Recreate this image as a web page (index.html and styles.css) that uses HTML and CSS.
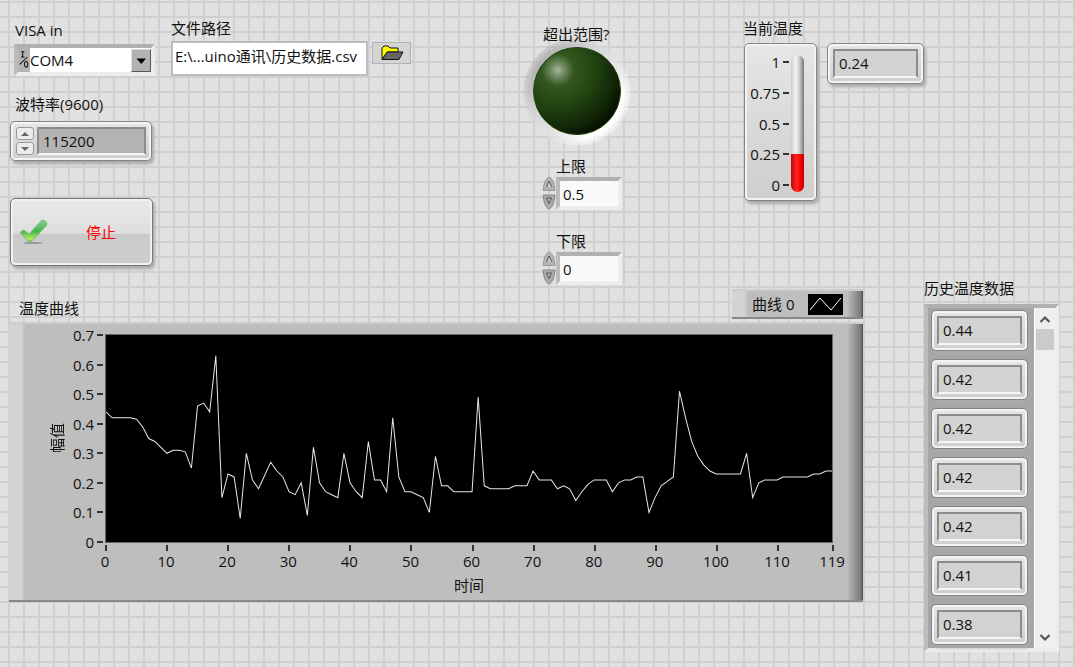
FILE: index.html
```
<!DOCTYPE html>
<html lang="zh-CN">
<head>
<meta charset="utf-8">
<title>温度监控</title>
<link rel="stylesheet" href="styles.css">
</head>
<body>
<main class="panel">
  <div class="main-column">
    <div class="top-row">
      <div class="settings">
        <div class="connection">
          <label class="label indent" for="visa">VISA in</label>
          <div class="visa sunken">
            <svg class="visa-icon" viewBox="0 0 14 24" aria-hidden="true"><path d="M3.500 2.500h4M5.500 2.500v6M3.500 8.500h4M2 17L11 8.500" fill="none" stroke="#111" stroke-width="1.200"/><ellipse cx="9.500" cy="17" rx="2" ry="3.300" fill="none" stroke="#111" stroke-width="1.200"/></svg>
            <select id="visa" class="visa-select"><option>COM4</option></select>
            <span class="visa-arrow"><svg viewBox="0 0 18 21" aria-hidden="true"><path d="M4.500 8.500h9.500l-4.700 5.500z" fill="#000"/></svg></span>
          </div>
          <label class="label indent baud-label" for="baud">波特率(9600)</label>
          <div class="bezel baud">
            <div class="stepper">
              <button type="button" class="step" aria-label="增加"><span class="tri up"></span></button>
              <button type="button" class="step" aria-label="减少"><span class="tri down"></span></button>
            </div>
            <input id="baud" class="readout baud-input" type="text" value="115200">
          </div>
          <button type="button" class="stop">
            <svg class="check" viewBox="0 0 30 26" aria-hidden="true">
              <defs><linearGradient id="leaf" x1="0" y1="0" x2="0" y2="1"><stop offset="0" stop-color="#8fd097"/><stop offset=".5" stop-color="#46b54c"/><stop offset=".85" stop-color="#b4ec62"/><stop offset="1" stop-color="#5cb436"/></linearGradient></defs>
              <ellipse cx="14" cy="24" rx="10" ry="1" fill="#999"/>
              <path d="M1 13.500L4.500 11l5.500 4L22.500 1.500l2.500-.5L28 4l-.5 2.500L13.500 21.500 10.500 23.500z" fill="url(#leaf)" stroke="#6ab870" stroke-width=".8"/>
            </svg>
            <span class="stop-text">停止</span>
          </button>
        </div>
        <div class="file">
          <label class="label" for="path">文件路径</label>
          <div class="file-row">
            <input id="path" class="path-input" type="text" value="E:\...uino通讯\历史数据.csv">
            <button type="button" class="browse" aria-label="浏览">
              <svg viewBox="0 0 24 16" aria-hidden="true"><path d="M2 14V3l2-2h4l2 2h8v4H8z" fill="#ff0" stroke="#111"/><path d="M2 14.500L7 7h16l-4 7.500z" fill="#666" stroke="#111"/></svg>
            </button>
          </div>
        </div>
      </div>

      <div class="range">
        <svg class="led" viewBox="0 0 108 108" role="img" aria-label="超出范围">
          <defs>
            <linearGradient id="ring" x1=".1" y1=".2" x2=".85" y2=".85"><stop offset="0" stop-color="#a8a8a8"/><stop offset=".25" stop-color="#cdcdcd"/><stop offset=".5" stop-color="#dfdfdf"/><stop offset=".7" stop-color="#ececec"/><stop offset=".85" stop-color="#fff"/></linearGradient>
            <radialGradient id="fade"><stop offset=".86" stop-color="#fff"/><stop offset="1" stop-color="#fff" stop-opacity=".25"/></radialGradient>
            <mask id="soft"><circle cx="54" cy="54" r="54" fill="url(#fade)"/></mask>
            <radialGradient id="lens" cx=".28" cy=".26" r=".8"><stop offset="0" stop-color="#a6b79c"/><stop offset=".1" stop-color="#6f8a62"/><stop offset=".23" stop-color="#34571f"/><stop offset=".55" stop-color="#204210"/><stop offset=".85" stop-color="#102406"/><stop offset="1" stop-color="#061000"/></radialGradient>
          </defs>
          <circle cx="54" cy="54" r="54" fill="url(#ring)" mask="url(#soft)"/>
          <circle cx="54" cy="53" r="43.500" fill="url(#lens)" stroke="#1c440a"/>
        </svg>
        <div class="label led-label">超出范围?</div>
        <div class="limit">
          <label class="label" for="upper">上限</label>
          <div class="limit-row">
            <div class="knobs">
              <button type="button" class="knob" aria-label="上限增加"><svg viewBox="0 0 16 17"><path d="M2 14.500Q3 3 8 1q5 2 6 13.500z" fill="#b4b4b4" stroke="#999"/><path d="M5.500 11L8 5l3 6" fill="#ccc" stroke="#555"/></svg></button>
              <button type="button" class="knob" aria-label="上限减少"><svg viewBox="0 0 16 17"><path d="M2 2h12Q13 14 8 16 3 14 2 2z" fill="#aaa" stroke="#888"/><path d="M5.500 5h5L8 10.500z" fill="#bbb" stroke="#555"/></svg></button>
            </div>
            <div class="sunken limit-frame"><input id="upper" class="limit-input" type="text" value="0.5"></div>
          </div>
        </div>
        <div class="limit second">
          <label class="label" for="lower">下限</label>
          <div class="limit-row">
            <div class="knobs">
              <button type="button" class="knob" aria-label="下限增加"><svg viewBox="0 0 16 17"><path d="M2 14.500Q3 3 8 1q5 2 6 13.500z" fill="#b4b4b4" stroke="#999"/><path d="M5.500 11L8 5l3 6" fill="#ccc" stroke="#555"/></svg></button>
              <button type="button" class="knob" aria-label="下限减少"><svg viewBox="0 0 16 17"><path d="M2 2h12Q13 14 8 16 3 14 2 2z" fill="#aaa" stroke="#888"/><path d="M5.500 5h5L8 10.500z" fill="#bbb" stroke="#555"/></svg></button>
            </div>
            <div class="sunken limit-frame"><input id="lower" class="limit-input" type="text" value="0"></div>
          </div>
        </div>
      </div>

      <div class="temperature">
        <div class="label">当前温度</div>
        <div class="temperature-row">
          <div class="bezel thermometer">
            <div class="scale">
              <span class="mark">1</span><span class="mark">0.75</span><span class="mark">0.5</span><span class="mark">0.25</span><span class="mark">0</span>
            </div>
            <div class="tube"><div class="mercury"></div></div>
          </div>
          <div class="bezel cell"><output class="readout">0.24</output></div>
        </div>
      </div>
    </div>

    <section class="chart">
      <div class="chart-head">
        <h2 class="label chart-title">温度曲线</h2>
        <div class="slab legend">
          <span>曲线 0</span>
          <svg class="legend-icon" viewBox="0 0 35 21" aria-hidden="true"><rect width="35" height="21" fill="#000"/><path d="M2 16L12 4l11 12L33 4" fill="none" stroke="#fff"/></svg>
        </div>
      </div>
      <div class="slab graph">
        <div class="y-title">幅值</div>
        <div class="y-axis">
          <span class="mark">0.7</span><span class="mark">0.6</span><span class="mark">0.5</span><span class="mark">0.4</span><span class="mark">0.3</span><span class="mark">0.2</span><span class="mark">0.1</span><span class="mark">0</span>
        </div>
        <svg class="plot" viewBox="0 0 119 70" preserveAspectRatio="none" role="img" aria-label="温度曲线">
          <polyline class="trace" points="0,26 1,28 2,28 3,28 4,28 5,28.500 6,31 7,35 8,36 9,38 10,40 11,39 12,39 13,39.500 14,45 15,24 16,23 17,26 18,7 19,55 20,47 21,48 22,62 23,40 24,49 25,52 26,47.500 27,43 28,46 29,48 30,53 31,54 32,50 33,61 34,38 35,50 36,53 37,54 38,55 39,40 40,50 41,53 42,55 43,36 44,49 45,49 46,53 47,28 48,48 49,53 50,53 51,54 52,55 53,60 54,41 55,51 56,51 57,53 58,53 59,53 60,53 61,21 62,51 63,52 64,52 65,52 66,52 67,51 68,51 69,51 70,46 71,49 72,49 73,49 74,52 75,51 76,52 77,56 78,53 79,50.500 80,49 81,49 82,49 83,53 84,50 85,49 86,49 87,48 88,48 89,60 90,55 91,51 92,49.500 93,48 94,19 95,28 96,36 97,41 98,44 99,46 100,47 101,47 102,47 103,47 104,47 105,40 106,55 107,50 108,49 109,49 110,49 111,48 112,48 113,48 114,48 115,48 116,47 117,47 118,46 119,46"/>
        </svg>
        <div class="x-axis">
          <span class="x-step"><span class="x-label">0</span></span><span class="x-step"><span class="x-label">10</span></span><span class="x-step"><span class="x-label">20</span></span><span class="x-step"><span class="x-label">30</span></span><span class="x-step"><span class="x-label">40</span></span><span class="x-step"><span class="x-label">50</span></span><span class="x-step"><span class="x-label">60</span></span><span class="x-step"><span class="x-label">70</span></span><span class="x-step"><span class="x-label">80</span></span><span class="x-step"><span class="x-label">90</span></span><span class="x-step"><span class="x-label">100</span></span><span class="x-step short"><span class="x-label">110</span></span><span class="x-step end"><span class="x-label">119</span></span>
        </div>
        <div class="x-title">时间</div>
      </div>
    </section>
  </div>

  <section class="history">
    <h2 class="label">历史温度数据</h2>
    <div class="sunken history-box">
      <div class="history-list">
        <div class="bezel cell"><output class="readout">0.44</output></div>
        <div class="bezel cell"><output class="readout">0.42</output></div>
        <div class="bezel cell"><output class="readout">0.42</output></div>
        <div class="bezel cell"><output class="readout">0.42</output></div>
        <div class="bezel cell"><output class="readout">0.42</output></div>
        <div class="bezel cell"><output class="readout">0.41</output></div>
        <div class="bezel cell"><output class="readout">0.38</output></div>
      </div>
      <div class="scrollbar">
        <button type="button" class="scroll-button" aria-label="向上滚动"><svg viewBox="0 0 12 8"><path d="M1.500 7L6 2.500 10.500 7" fill="none" stroke="#555" stroke-width="2.200"/></svg></button>
        <div class="thumb"></div>
        <button type="button" class="scroll-button last" aria-label="向下滚动"><svg viewBox="0 0 12 8"><path d="M1.500 1L6 5.500 10.500 1" fill="none" stroke="#555" stroke-width="2.200"/></svg></button>
      </div>
    </div>
  </section>
</main>
</body>
</html>
```
FILE: styles.css
```
* { box-sizing: border-box; }

body {
  margin: 0;
  min-height: 100vh;
  background-color: #e1e1e1;
  background-image:
    linear-gradient(to right, #d0d0d0 2px, transparent 2px),
    linear-gradient(to bottom, #d0d0d0 2px, transparent 2px);
  background-size: 15px 15px;
  background-position: 8px 1px;
  color: #111;
  font: 15px/20px "Open Sans", "Noto Sans CJK SC", sans-serif;
}

button, input, select { font: inherit; color: inherit; margin: 0; padding: 0; border: 0; border-radius: 0; }
button { display: flex; align-items: center; justify-content: center; background: none; }
svg { display: block; }

.label { display: block; margin: 0; font-size: 15px; font-weight: 400; line-height: 20px; white-space: nowrap; }
.indent { padding-left: 5px; }

.panel { display: flex; padding: 0 16px 0 9px; }
.main-column { flex: 1; min-width: 0; }

/* Shared frames */
.sunken { border: 4px solid; border-color: #b0b0b0 #ededed #ececec #bcbcbc; }
.bezel {
  display: flex;
  border: 1px solid #858585;
  border-radius: 5px;
  background: linear-gradient(#e6e6e6, #cecece);
  box-shadow: inset 0 0 0 2px #f3f3f3, 2px 3px 3px #aaa;
}
.readout {
  display: block;
  flex: 1;
  min-width: 0;
  padding: 0 4px;
  border: 2px solid;
  border-color: #8c8c8c #8c8c8c #f6f6f6 #8c8c8c;
  background: #d2d2d2;
  line-height: 24px;
}
.cell { width: 97px; height: 41px; padding: 5px; }

.slab {
  border-top: 2px solid #cdcdcd;
  border-bottom: 2px solid #888;
  background: linear-gradient(to right, #d3d3d3 12px, #bebebe 16px, #bebebe calc(100% - 16px), #777 calc(100% - 2px), #484848);
}

/* Controls */
.top-row { display: flex; justify-content: space-between; height: 289px; }
.settings { display: flex; gap: 16px; padding-left: 1px; }
.connection { width: 145px; padding-top: 20px; }
.visa { position: relative; display: flex; height: 32px; margin: 4px 0 0 4px; background: #b4b4b4; }
.visa-icon { width: 12px; height: 24px; }
.visa-select { flex: 1; min-width: 0; height: 24px; background: #fff; appearance: none; }
.visa-arrow { position: absolute; top: 1px; right: 0; width: 20px; height: 23px; border: 1px solid; border-color: #ddd #555 #555 #ddd; background: #b2b2b2; pointer-events: none; }
.baud-label { margin-top: 18px; }
.baud { width: 142px; height: 40px; margin-top: 7px; padding: 5px; }
.stepper { display: flex; flex-direction: column; gap: 2px; width: 18px; margin-right: 3px; }
.step { flex: 1; border: 1px solid #999; border-radius: 3px; background: #ececec; }
.tri { width: 8px; border: 4px solid transparent; }
.up { border-top: 0; border-bottom: 4px solid #666; }
.down { border-bottom: 0; border-top: 4px solid #666; }
.baud-input { background: #b3b3b3; }

.stop {
  width: 143px;
  height: 68px;
  margin-top: 37px;
  padding-left: 8px;
  justify-content: flex-start;
  border: 1px solid #777;
  border-radius: 5px;
  background: linear-gradient(#eaeaea, #dedede 52%, #cacaca 53%, #cecece);
  box-shadow: inset 0 0 0 2px #f1f1f1, 2px 3px 3px #aaa;
  color: #f00;
}
.check { width: 30px; height: 26px; }
.stop-text { padding-left: 37px; }

.file { padding-top: 18px; }
.file-row { display: flex; align-items: flex-start; gap: 4px; margin-top: 3px; }
.path-input { width: 197px; height: 35px; padding: 0 2px 6px; border: 2px solid #bbbbc0; background: #fff; }
.browse { width: 39px; height: 22px; margin-top: 1px; border: 1px solid #b3b3b3; background: #d4d4d4; }
.browse svg { width: 24px; height: 16px; }

/* Range indicator and limits */
.range { display: grid; grid-template-columns: 108px; align-content: start; width: 108px; padding-top: 24px; }
.led { grid-area: 1 / 1; width: 108px; height: 108px; margin-top: 14px; }
.led-label { grid-area: 1 / 1; z-index: 1; padding-left: 20px; }
.limit { padding-left: 18px; margin-top: 10px; }
.second { margin-top: 20px; }
.limit .label { padding-left: 15px; }
.limit-row { display: flex; height: 35px; }
.knobs { display: flex; flex-direction: column; width: 15px; }
.knob, .knob svg { width: 16px; height: 17px; }
.limit-frame { width: 66px; height: 33px; margin-top: 1px; }
.limit-input { display: block; width: 100%; height: 25px; padding-left: 3px; background: #fafafa; }

/* Temperature */
.temperature { padding-top: 18px; }
.temperature-row { display: flex; align-items: flex-start; gap: 10px; margin: 5px 0 0 1px; }
.thermometer { width: 73px; height: 158px; padding: 8px 12px 5px 5px; gap: 2px; }
.scale, .y-axis { display: flex; flex-direction: column; justify-content: space-between; align-items: flex-end; }
.scale { flex: 1; }
.mark { display: flex; align-items: center; gap: 3px; line-height: 20px; }
.mark::after { content: ""; width: 6px; height: 2px; background: #333; }
.tube { display: flex; align-items: flex-end; width: 13px; height: 137px; margin-top: 3px; border-radius: 7px; overflow: hidden; background: linear-gradient(to right, #ccc, #f3f3f3 35%, #ccc 65%, #777); }
.mercury { width: 100%; height: 28%; background: linear-gradient(to right, #c00, #ff2525 45%, #f00 70%, #b00); }

/* Chart */
.chart { margin-right: 61px; }
.chart-head { display: flex; justify-content: space-between; height: 30px; }
.chart-title { padding: 9px 0 0 10px; }
.legend { display: flex; align-items: center; gap: 14px; width: 131px; padding-left: 20px; }
.legend-icon { width: 35px; height: 21px; }
.graph {
  display: grid;
  grid-template-columns: 16px 40px 1fr;
  grid-template-rows: 209px 32px auto;
  margin-top: 3px;
  padding: 10px 30px 5px 40px;
}
.y-title { writing-mode: vertical-rl; text-orientation: sideways; transform: rotate(180deg); align-self: center; line-height: 16px; }
.y-axis { margin: -9px 2px -9px 0; }
.plot { width: 100%; height: 209px; border: 1px solid #666; background: #000; }
.trace { fill: none; stroke: #e8e8e8; stroke-width: 1px; vector-effect: non-scaling-stroke; }
.x-axis { grid-column: 3; display: flex; padding-top: 2px; }
.x-step { flex: 10 0 0; min-width: 0; }
.x-step::before { content: ""; display: block; width: 2px; height: 6px; background: #333; }
.short { flex-grow: 9; }
.end { flex: 0 0 1px; }
.x-label { display: block; width: 40px; margin-left: -20px; text-align: center; }
.x-title { grid-column: 3; text-align: center; line-height: 20px; }

/* History */
.history { width: 135px; padding-top: 278px; }
.history-box { display: flex; height: 348px; margin-top: 6px; background: #a6a6a6; }
.history-list { display: flex; flex-direction: column; flex: 1; gap: 8px; padding: 2px 0 0 3px; }
.scrollbar { display: flex; flex-direction: column; width: 21px; background: #efefef; border-left: 1px solid #fff; }
.scroll-button { height: 21px; }
.scroll-button svg { width: 12px; height: 8px; }
.last { margin-top: auto; }
.thumb { height: 21px; margin: 0 1px; background: #cbcbcb; }
```
